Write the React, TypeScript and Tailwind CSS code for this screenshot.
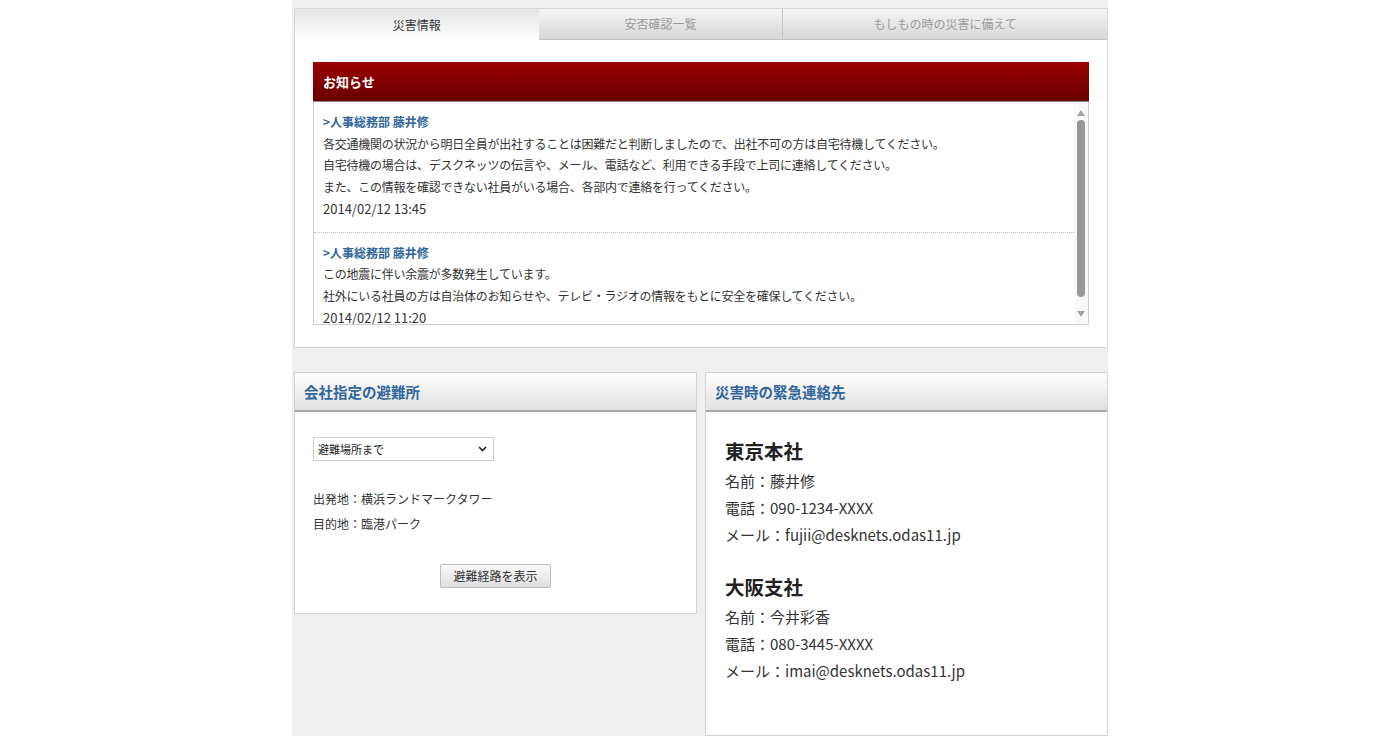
const jp = "font-['Meiryo_UI','Noto_Sans_CJK_JP',sans-serif]"

const notices = [
  {
    author: '>人事総務部 藤井修',
    lines: [
      '各交通機関の状況から明日全員が出社することは困難だと判断しましたので、出社不可の方は自宅待機してください。',
      '自宅待機の場合は、デスクネッツの伝言や、メール、電話など、利用できる手段で上司に連絡してください。',
      'また、この情報を確認できない社員がいる場合、各部内で連絡を行ってください。',
    ],
    date: '2014/02/12 13:45',
  },
  {
    author: '>人事総務部 藤井修',
    lines: [
      'この地震に伴い余震が多数発生しています。',
      '社外にいる社員の方は自治体のお知らせや、テレビ・ラジオの情報をもとに安全を確保してください。',
    ],
    date: '2014/02/12 11:20',
  },
]

const contacts = [
  { office: '東京本社', name: '藤井修', tel: '090-1234-XXXX', mail: 'fujii@desknets.odas11.jp' },
  { office: '大阪支社', name: '今井彩香', tel: '080-3445-XXXX', mail: 'imai@desknets.odas11.jp' },
]

const PanelHeader = ({ title }: { title: string }) => (
  <div className="h-[39px] flex items-center px-[9px] bg-gradient-to-b from-white to-[#e1e1e1] border-b-2 border-[#a9a9a9]">
    <span className="text-[14.5px] font-bold text-[#33669a]">{title}</span>
  </div>
)

export default function App() {
  return (
    <div className={`min-h-screen bg-white ${jp} text-[#333]`}>
      <div className="w-[816px] mx-auto bg-[#efefef] min-h-screen pt-[8px] pl-[2px]">
        {/* 災害情報 panel */}
        <div className="bg-white border border-[#d6d6d6]">
          {/* tabs */}
          <div className="grid grid-cols-[30%_30%_40%] h-[31px] text-[12px]">
            <div className="flex items-center justify-center bg-gradient-to-b from-[#e4e4e4] to-white text-[#333]">
              災害情報
            </div>
            <div className="flex items-center justify-center bg-gradient-to-b from-[#f6f6f6] to-[#d7d7d7] border-b border-[#c6c6c6] text-[#999]">
              安否確認一覧
            </div>
            <div className="flex items-center justify-center bg-gradient-to-b from-[#f6f6f6] to-[#d7d7d7] border-b border-l border-[#c6c6c6] text-[#999]">
              もしもの時の災害に備えて
            </div>
          </div>

          <div className="px-[18px] pt-[22px] pb-[22px]">
            <div className="h-[40px] flex items-center px-[10px] bg-gradient-to-b from-[#9c0000] to-[#690000] border-b border-[#8a8a8a]">
              <span className="text-white font-bold text-[13px]">お知らせ</span>
            </div>
            <div className="h-[223px] flex border border-t-0 border-[#cfcfcf]">
              <div className="flex-1 overflow-hidden">
                {notices.map((n, i) => (
                  <div
                    key={i}
                    className={`px-[9px] pt-[9px] pb-[12px] text-[12px] leading-[21.7px] ${i === 0 ? 'border-b border-dotted border-[#bbb]' : ''}`}
                  >
                    <div className="font-bold text-[#33669a]">{n.author}</div>
                    {n.lines.map((l, j) => (
                      <div key={j} className="tracking-[-0.25px]">{l}</div>
                    ))}
                    <div className="text-[13px]">{n.date}</div>
                  </div>
                ))}
              </div>
              {/* scrollbar */}
              <div className="w-[14px] bg-[#f8f8f8] flex flex-col items-center pt-[8px] pb-[7px]">
                <svg width="8" height="6" viewBox="0 0 8 6">
                  <path d="M4 0 L8 6 L0 6 Z" fill="#a3a3a3" />
                </svg>
                <div className="w-[8px] flex-1 my-[4px] rounded-full bg-[#979797] mb-[14px]" />
                <svg width="8" height="6" viewBox="0 0 8 6">
                  <path d="M0 0 L8 0 L4 6 Z" fill="#a3a3a3" />
                </svg>
              </div>
            </div>
          </div>
        </div>

        {/* bottom panels */}
        <div className="flex gap-[8px] mt-[24px] items-start">
          <div className="w-[403px] bg-white border border-[#d3d3d3]">
            <PanelHeader title="会社指定の避難所" />
            <div className="px-[18px] pt-[25px] pb-[25px] text-[12px]">
              <div className="w-[181px] h-[24px] border border-[#cfcfcf] flex items-center justify-between pl-[4px] pr-[6px] text-[11px] text-[#222]">
                <span>避難場所まで</span>
                <svg width="9" height="6" viewBox="0 0 9 6">
                  <path d="M1 1 L4.5 4.5 L8 1" fill="none" stroke="#222" strokeWidth="1.6" />
                </svg>
              </div>
              <div className="mt-[25px] leading-[25px]">
                <div>出発地：横浜ランドマークタワー</div>
                <div>目的地：臨港パーク</div>
              </div>
              <div className="flex justify-center mt-[28px]">
                <div className="w-[111px] h-[24px] flex items-center justify-center rounded-[2px] border border-[#bdbdbd] bg-gradient-to-b from-[#fafafa] to-[#dedede] text-[12px] text-[#333]">
                  避難経路を表示
                </div>
              </div>
            </div>
          </div>

          <div className="w-[403px] h-[364px] bg-white border border-[#d3d3d3]">
            <PanelHeader title="災害時の緊急連絡先" />
            <div className="px-[19px] pt-[25px]">
              {contacts.map((c, i) => (
                <div key={i} className={i > 0 ? 'mt-[25px]' : ''}>
                  <div className="text-[19.5px] font-bold text-[#222] leading-[28px] mb-[2px]">{c.office}</div>
                  <div className="text-[15px] leading-[27px]">
                    <div>名前：{c.name}</div>
                    <div>電話：{c.tel}</div>
                    <div>メール：{c.mail}</div>
                  </div>
                </div>
              ))}
            </div>
          </div>
        </div>
      </div>
    </div>
  )
}
